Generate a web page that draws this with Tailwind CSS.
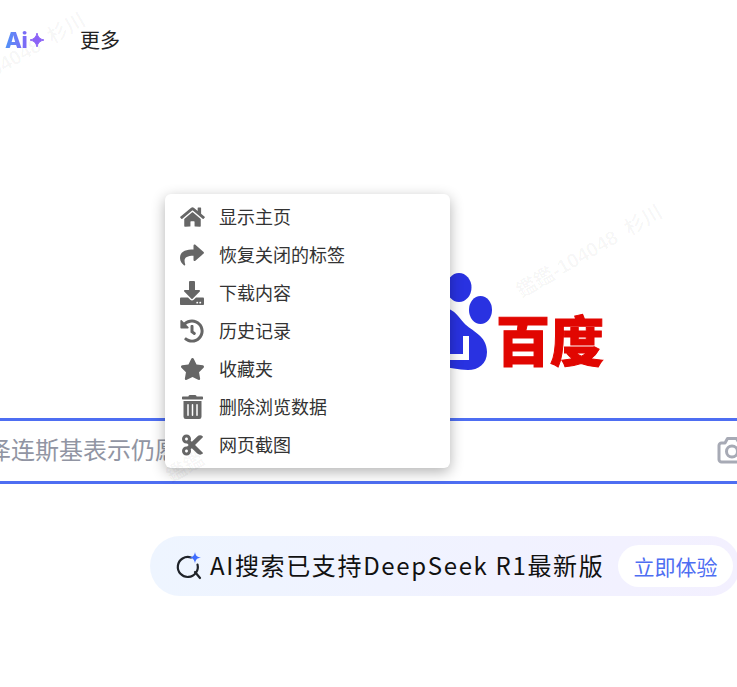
<!DOCTYPE html>
<html lang="zh">
<head>
<meta charset="utf-8">
<script src="https://cdn.jsdelivr.net/npm/@tailwindcss/browser@4"></script>
<title>百度</title>
</head>
<body class="bg-white">
<div class="relative w-[737px] h-[687px] overflow-hidden bg-white font-['Noto_Sans_CJK_SC','Noto_Sans',sans-serif]">

  <!-- watermarks -->
  <div class="absolute left-[-70px] top-[44px] -rotate-[30deg] whitespace-nowrap text-[20px] font-bold text-black/[0.035] font-['Liberation_Sans','Noto_Sans_CJK_SC',sans-serif]">鑑鑑-104048&nbsp;&nbsp;杉川</div>
  <div class="absolute left-[507px] top-[236px] -rotate-[30deg] whitespace-nowrap text-[20px] font-bold text-black/[0.035] font-['Liberation_Sans','Noto_Sans_CJK_SC',sans-serif]">鑑鑑-104048&nbsp;&nbsp;杉川</div>
  <div class="absolute left-[165px] top-[452px] z-30 -rotate-[30deg] whitespace-nowrap text-[20px] font-bold text-black/[0.035] font-['Liberation_Sans','Noto_Sans_CJK_SC',sans-serif]">鑑鑑</div>

  <!-- top bar -->
  <header class="relative flex h-[80px] items-center pl-[5px]">
    <div class="flex w-[75px] items-center">
      <span class="bg-gradient-to-r from-[#4d93f7] to-[#7d66f6] bg-clip-text font-['Inter',sans-serif] text-[22px] leading-none font-extrabold tracking-[-0.5px] text-transparent">Ai</span>
      <svg class="ml-[3px]" width="14" height="14" viewBox="0 0 16 16"><path d="M8 0C8.9 4.6 11.4 7.1 16 8C11.4 8.9 8.9 11.4 8 16C7.1 11.4 4.6 8.9 0 8C4.6 7.1 7.1 4.6 8 0Z" fill="#8b62f6" stroke="#8b62f6" stroke-width="1" stroke-linejoin="round"/></svg>
    </div>
    <span class="text-[20px] leading-none text-[#222]">更多</span>
  </header>

  <!-- logo -->
  <div class="relative ml-[380px] mt-[185px] flex h-[110px] items-start">
    <svg width="114" height="110" viewBox="380 265 114 110" class="shrink-0">
      <g fill="#2932e1">
        <ellipse cx="459" cy="287.5" rx="12.5" ry="14.5"/>
        <ellipse cx="480.5" cy="310" rx="11.5" ry="14"/>
        <path d="M448 309C454 310 458 316 464 323C471 331 487 335 487 352C487 364 478 370 468 370C458 370 450 367 440 367C425 367 412 370 412 352C412 336 432 325 437 318C441 312 444 309 448 309Z"/>
      </g>
      <path d="M463 336H469V360H438V336H444V354H463Z" fill="#fff"/>
    </svg>
    <span class="ml-[2px] mt-[39px] text-[54px] leading-[70px] font-black text-[#e10601] [-webkit-text-stroke:1px_#e10601]">百度</span>
  </div>

  <!-- search box -->
  <div class="relative mt-[43px] flex h-[66px] items-center justify-between overflow-hidden border-y-[3px] border-[#4e6ef2] bg-white">
    <span class="ml-[-13px] mt-[-4px] whitespace-nowrap text-[24px] leading-none text-[#9195a3]">泽连斯基表示仍愿意</span>
    <svg class="mr-[-10px] mt-[-3px] shrink-0" width="30" height="28" viewBox="0 0 30 28" fill="none" stroke="#a7aab5" stroke-width="3" stroke-linejoin="round"><path d="M2 9.5A2.5 2.5 0 0 1 4.5 7H8L10.5 2.5H19.5L22 7H25.5A2.5 2.5 0 0 1 28 9.5V23.5A2.5 2.5 0 0 1 25.5 26H4.5A2.5 2.5 0 0 1 2 23.5Z"/><circle cx="15" cy="15.5" r="5.5"/></svg>
  </div>

  <!-- AI pill -->
  <div class="relative ml-[150px] mt-[52px] flex h-[60px] w-[590px] items-center rounded-full bg-gradient-to-r from-[#eef5ff] to-[#f3f0ff] pl-[26px]">
    <svg class="shrink-0" width="28" height="28" viewBox="0 0 28 28" fill="none">
      <path d="M15 5.5A10 10 0 1 0 21.5 12.5" stroke="#1f2329" stroke-width="2.2" stroke-linecap="round"/>
      <path d="M19 20L24 26" stroke="#1f2329" stroke-width="2.2" stroke-linecap="round"/>
      <path d="M19 0C19.6 3.6 21 5 25 5.6C21 6.2 19.6 7.6 19 11.5C18.4 7.6 17 6.2 13 5.6C17 5 18.4 3.6 19 0Z" fill="#3f6dff"/>
    </svg>
    <span class="ml-[6px] mt-[-2px] whitespace-nowrap text-[24px] leading-none tracking-[1.65px] text-[#111]">AI搜索已支持DeepSeek R1最新版</span>
    <span class="absolute left-[468px] top-[9px] flex h-[42px] w-[115px] items-center justify-center rounded-full bg-white text-[21px] leading-none text-[#4e6ef2]">立即体验</span>
  </div>

  <!-- context menu -->
  <ul class="absolute left-[165px] top-[194px] z-20 w-[285px] rounded-[6px] bg-white py-[4px] shadow-[0_4px_14px_rgba(0,0,0,0.3)]">
    <li class="flex h-[38px] items-center text-[18px] leading-none text-[#333]">
      <span class="flex w-[54px] justify-center"><svg width="25" height="22" viewBox="0 0 576 512" fill="#666"><path d="M280.37 148.26L96 300.11V464a16 16 0 0 0 16 16l112.06-.29a16 16 0 0 0 15.92-16V368a16 16 0 0 1 16-16h64a16 16 0 0 1 16 16v95.64a16 16 0 0 0 16 16.05L464 480a16 16 0 0 0 16-16V300L295.67 148.26a12.19 12.19 0 0 0-15.3 0zM571.6 251.47L488 182.56V44.05a12 12 0 0 0-12-12h-56a12 12 0 0 0-12 12v72.61L318.47 43a48 48 0 0 0-61 0L4.34 251.47a12 12 0 0 0-1.6 16.9l25.5 31A12 12 0 0 0 45.15 301l235.22-193.74a12.19 12.19 0 0 1 15.3 0L530.9 301a12 12 0 0 0 16.9-1.6l25.5-31a12 12 0 0 0-1.7-16.93z"/></svg></span><span class="mt-[-2px]">显示主页</span>
    </li>
    <li class="flex h-[38px] items-center text-[18px] leading-none text-[#333]">
      <span class="flex w-[54px] justify-center"><svg width="24" height="24" viewBox="0 0 512 512" fill="#666"><path d="M503.691 189.836L327.687 37.851C312.281 24.546 288 35.347 288 56.015v80.053C127.371 137.907 0 170.1 0 322.326c0 61.441 39.581 122.309 83.333 154.132 13.653 9.931 33.111-2.533 28.077-18.631C66.066 312.814 132.917 274.316 288 272.085V360c0 20.7 24.3 31.453 39.687 18.164l176.004-152c11.071-9.562 11.086-26.753 0-36.328z"/></svg></span><span class="mt-[-2px]">恢复关闭的标签</span>
    </li>
    <li class="flex h-[38px] items-center text-[18px] leading-none text-[#333]">
      <span class="flex w-[54px] justify-center"><svg width="24" height="24" viewBox="0 0 512 512" fill="#666"><path d="M216 0h80c13.3 0 24 10.7 24 24v168h87.7c17.8 0 26.7 21.5 14.1 34.1L269.7 378.3c-7.5 7.5-19.8 7.5-27.3 0L90.1 226.1c-12.6-12.6-3.7-34.1 14.1-34.1H192V24c0-13.3 10.7-24 24-24zm296 376v112c0 13.3-10.7 24-24 24H24c-13.3 0-24-10.7-24-24V376c0-13.3 10.7-24 24-24h146.7l49 49c20.1 20.1 52.5 20.1 72.6 0l49-49H488c13.3 0 24 10.7 24 24zm-124 88c0-11-9-20-20-20s-20 9-20 20 9 20 20 20 20-9 20-20zm64 0c0-11-9-20-20-20s-20 9-20 20 9 20 20 20 20-9 20-20z"/></svg></span><span class="mt-[-2px]">下载内容</span>
    </li>
    <li class="flex h-[38px] items-center text-[18px] leading-none text-[#333]">
      <span class="flex w-[54px] justify-center"><svg width="24" height="24" viewBox="0 0 512 512" fill="#666"><path d="M504 255.531c.253 136.64-111.18 248.372-247.82 248.468-59.015.042-113.223-20.53-155.822-54.911-11.077-8.94-11.905-25.541-1.839-35.607l11.267-11.267c8.609-8.609 22.353-9.551 31.891-1.984C173.062 425.135 212.781 440 256 440c101.705 0 184-82.311 184-184 0-101.705-82.311-184-184-184-48.814 0-93.149 18.969-126.068 49.932l50.754 50.754c10.08 10.08 2.941 27.314-11.313 27.314H24c-8.837 0-16-7.163-16-16V38.627c0-14.254 17.234-21.393 27.314-11.314l49.372 49.372C129.209 34.136 189.552 8 256 8c136.81 0 247.747 110.78 248 247.531zm-180.912 78.784l9.823-12.63c8.138-10.463 6.253-25.542-4.21-33.679L288 256.349V152c0-13.255-10.745-24-24-24h-16c-13.255 0-24 10.745-24 24v135.651l65.409 50.874c10.463 8.137 25.541 6.253 33.679-4.21z"/></svg></span><span class="mt-[-2px]">历史记录</span>
    </li>
    <li class="flex h-[38px] items-center text-[18px] leading-none text-[#333]">
      <span class="flex w-[54px] justify-center"><svg width="25" height="22" viewBox="0 0 576 512" fill="#666"><path d="M259.3 17.8L194 150.2 47.9 171.5c-26.2 3.8-36.7 36.1-17.7 54.6l105.7 103-25 145.5c-4.5 26.3 23.2 46 46.4 33.7L288 439.6l130.7 68.7c23.2 12.2 50.9-7.4 46.4-33.7l-25-145.5 105.7-103c19-18.5 8.5-50.8-17.7-54.6L382 150.2 316.7 17.8c-11.7-23.6-45.6-24.1-57.4 0z"/></svg></span><span class="mt-[-2px]">收藏夹</span>
    </li>
    <li class="flex h-[38px] items-center text-[18px] leading-none text-[#333]">
      <span class="flex w-[54px] justify-center"><svg width="21" height="24" viewBox="0 0 448 512" fill="#666"><path d="M32 464a48 48 0 0 0 48 48h288a48 48 0 0 0 48-48V128H32zm272-256a16 16 0 0 1 32 0v224a16 16 0 0 1-32 0zm-96 0a16 16 0 0 1 32 0v224a16 16 0 0 1-32 0zm-96 0a16 16 0 0 1 32 0v224a16 16 0 0 1-32 0zM432 32H312l-9.4-18.7A24 24 0 0 0 281.1 0H166.8a23.72 23.72 0 0 0-21.4 13.3L136 32H16A16 16 0 0 0 0 48v32a16 16 0 0 0 16 16h416a16 16 0 0 0 16-16V48a16 16 0 0 0-16-16z"/></svg></span><span class="mt-[-2px]">删除浏览数据</span>
    </li>
    <li class="flex h-[38px] items-center text-[18px] leading-none text-[#333]">
      <span class="flex w-[54px] justify-center"><svg width="21" height="24" viewBox="0 0 448 512" fill="#666"><path d="M278.1 256L444.5 89.6c4.7-4.7 4.7-12.3 0-17-32.8-32.8-86-32.8-118.8 0L210.2 188.1l-24.9-24.9c4.3-10.9 6.7-22.8 6.7-35.3C192 74.9 149 32 96 32S0 74.9 0 128s43 96 96 96c4.5 0 9-.3 13.4-.9l32.9 32.9-32.9 32.9c-4.4-.6-8.8-.9-13.4-.9-53 0-96 43-96 96s43 96 96 96 96-43 96-96c0-12.5-2.4-24.3-6.7-35.2l24.9-24.9 115.5 115.5c32.8 32.8 86 32.8 118.8 0 4.7-4.7 4.7-12.3 0-17L278.1 256zM96 160c-17.6 0-32-14.4-32-32s14.4-32 32-32 32 14.4 32 32-14.4 32-32 32zm0 256c-17.6 0-32-14.4-32-32s14.4-32 32-32 32 14.4 32 32-14.4 32-32 32z"/></svg></span><span class="mt-[-2px]">网页截图</span>
    </li>
  </ul>
</div>
</body>
</html>
